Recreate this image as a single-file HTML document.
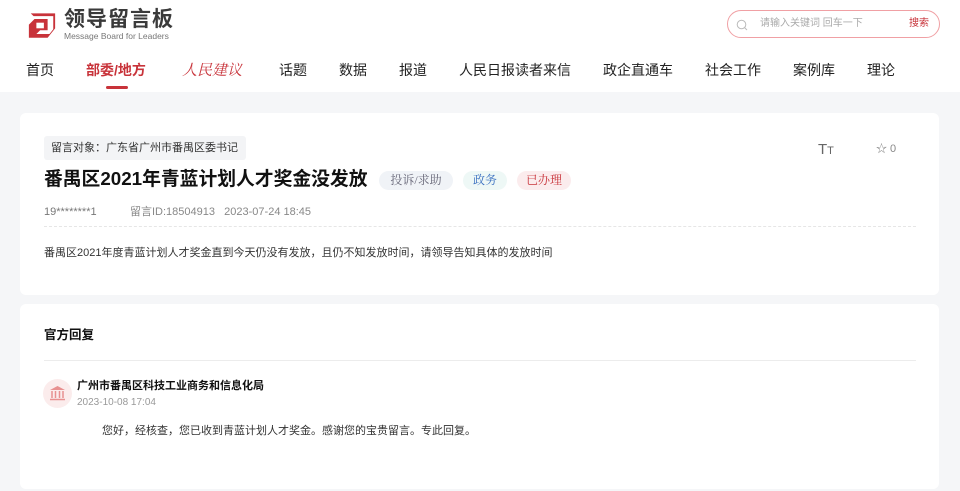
<!DOCTYPE html>
<html><head><meta charset="utf-8"><style>
*{margin:0;padding:0;box-sizing:border-box}
body{width:960px;height:491px;overflow:hidden;background:#f5f6f8;font-family:"Liberation Sans","Noto Sans CJK SC",sans-serif;color:#222;position:relative}
.hdr{position:absolute;left:0;top:0;width:960px;height:92px;background:#fff}
.abs{position:absolute;white-space:nowrap;line-height:1.2}
.nav{font-size:14px;top:62px;color:#222}
.card{position:absolute;left:20px;width:919px;background:#fff;border-radius:6px}
.tag{position:absolute;top:171px;height:19px;border-radius:10px;font-size:12px;line-height:19px;text-align:center;font-family:"Liberation Serif","Noto Serif CJK SC",serif}
</style></head><body>
<div class="hdr">
<svg class="abs" style="left:27px;top:11px" width="30" height="29" viewBox="0 0 32 30"><path d="M4 2H30V18L22 28H2V14L8 8H22V20H14L10 24H24L28 19V5H7Z" fill="#c8333a"/><path d="M10 12H18V18H10Z" fill="#fff"/></svg>
<div class="abs" style="left:64px;top:9px;font-size:21px;line-height:22px;font-weight:bold;color:#3a3a3a;letter-spacing:1px">领导留言板</div>
<div class="abs" style="left:64px;top:32px;font-size:8.5px;line-height:9px;color:#777">Message Board for Leaders</div>
<div class="abs" style="left:727px;top:10px;width:213px;height:28px;border:1px solid #f0a0a4;border-radius:14px"></div>
<svg class="abs" style="left:736px;top:19px" width="12" height="12" viewBox="0 0 12 12"><circle cx="5.5" cy="5.5" r="4.3" fill="none" stroke="#bbb" stroke-width="1"/><path d="M8.6 8.6L11 11" stroke="#bbb"/></svg>
<div class="abs" style="left:760px;top:18px;font-size:10px;color:#aaa">请输入关键词 回车一下</div>
<div class="abs" style="left:909px;top:18px;font-size:10px;color:#c8333a">搜索</div>
<div class="abs nav" style="left:26px">首页</div>
<div class="abs nav" style="left:86px;color:#c8333a;font-weight:bold">部委/地方</div>
<div class="abs" style="left:106px;top:86px;width:22px;height:3px;background:#c8333a;border-radius:2px"></div>
<div class="abs nav" style="left:182px;color:#c8333a;font-family:'Noto Serif CJK SC',serif;font-style:italic;font-size:15px;top:61px">人民建议</div>
<div class="abs nav" style="left:279px">话题</div>
<div class="abs nav" style="left:339px">数据</div>
<div class="abs nav" style="left:399px">报道</div>
<div class="abs nav" style="left:459px">人民日报读者来信</div>
<div class="abs nav" style="left:603px">政企直通车</div>
<div class="abs nav" style="left:705px">社会工作</div>
<div class="abs nav" style="left:793px">案例库</div>
<div class="abs nav" style="left:867px">理论</div>
</div>
<div class="card" style="top:113px;height:182px"></div>
<div class="abs" style="left:44px;top:136px;width:202px;height:24px;background:#f3f4f6;border-radius:3px;font-size:11px;line-height:24px;padding-left:7px;color:#333">留言对象：广东省广州市番禺区委书记</div>
<div class="abs" style="left:818px;top:141px;font-size:15px;color:#666">T<span style="font-size:11px">T</span></div>
<div class="abs" style="left:876px;top:143px;font-size:11px;color:#888">☆ 0</div>
<div class="abs" style="left:44px;top:168px;font-size:18.8px;font-weight:bold;color:#111">番禺区2021年青蓝计划人才奖金没发放</div>
<div class="tag" style="left:379px;width:74px;background:#f0f3f7;color:#667">投诉/求助</div>
<div class="tag" style="left:463px;width:44px;background:#eef8f6;color:#3a70c0">政务</div>
<div class="tag" style="left:517px;width:54px;background:#fbeced;color:#c8333a">已办理</div>
<div class="abs" style="left:44px;top:206px;font-size:11px;color:#777">19********1</div>
<div class="abs" style="left:130px;top:206px;font-size:11px;color:#888">留言ID:18504913 &nbsp;&nbsp;2023-07-24 18:45</div>
<div class="abs" style="left:44px;top:226px;width:872px;border-top:1px dashed #e6e6e6"></div>
<div class="abs" style="left:44px;top:247px;font-size:11px;color:#333">番禺区2021年度青蓝计划人才奖金直到今天仍没有发放，且仍不知发放时间，请领导告知具体的发放时间</div>
<div class="card" style="top:304px;height:185px"></div>
<div class="abs" style="left:44px;top:328px;font-size:12.5px;font-weight:bold;color:#111">官方回复</div>
<div class="abs" style="left:44px;top:360px;width:872px;border-top:1px solid #ececec"></div>
<div class="abs" style="left:43px;top:379px;width:29px;height:29px;border-radius:50%;background:#fbecec"></div>
<svg class="abs" style="left:49px;top:385px" width="17" height="16" viewBox="0 0 17 16"><path d="M1 5L8.5 1L16 5Z" fill="#e89090"/><path d="M3 6v7M6.5 6v7M10.5 6v7M14 6v7M1 14.5h15" stroke="#e89090" stroke-width="1.5"/></svg>
<div class="abs" style="left:77px;top:380px;font-size:11px;font-weight:bold;color:#111">广州市番禺区科技工业商务和信息化局</div>
<div class="abs" style="left:77px;top:397px;font-size:10px;color:#999">2023-10-08 17:04</div>
<div class="abs" style="left:102px;top:425px;font-size:11px;color:#333">您好，经核查，您已收到青蓝计划人才奖金。感谢您的宝贵留言。专此回复。</div>
</body></html>
